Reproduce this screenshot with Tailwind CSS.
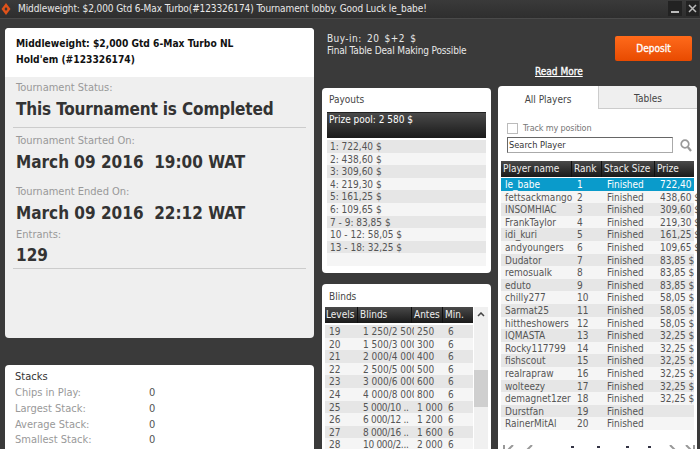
<!doctype html>
<html>
<head>
  <meta charset="UTF-8">
  <script src="https://cdn.jsdelivr.net/npm/@tailwindcss/browser@4"></script>
</head>
<body class="w-[700px] h-[449px] overflow-hidden bg-[#3a3a3a] font-['DejaVu_Sans_Condensed','DejaVu_Sans',sans-serif] text-[10px] text-[#333]">

  <!-- Title bar -->
  <header class="h-[19px] bg-gradient-to-b from-[#3a3a3a] to-[#2e2e2e] border-b border-[#4a4a4a] flex items-center text-[#e8e8e8]">
    <svg class="ml-[1px] w-[10px] h-[14px]" viewBox="0 0 10 14"><path d="M5 1 L9.5 7 L5 13 L.5 7 Z" fill="#e0521a"/><path d="M5 5 L6.5 7 L5 9 L3.5 7 Z" fill="#333"/></svg>
    <span class="ml-[7px] leading-none tracking-[-0.1px]">Middleweight: $2,000 Gtd 6-Max Turbo(#123326174) Tournament lobby. Good Luck le_babe!</span>
    <div class="ml-auto flex gap-[4px] h-[15px] mt-[-2px] mr-[1px]">
      <div class="w-[14px] bg-[#222] relative"><div class="absolute left-[3px] bottom-[3px] w-[8px] h-[2px] bg-[#bbb]"></div></div>
      <div class="w-[13px] bg-[#222] flex items-center justify-center">
        <svg class="w-[9px] h-[9px]" viewBox="0 0 9 9"><path d="M1 1 L8 8 M8 1 L1 8" stroke="#bbb" stroke-width="1.5"/></svg>
      </div>
    </div>
  </header>

  <div class="flex">
    <!-- Left column -->
    <div class="w-[322px] pl-[5px] pt-[9px] shrink-0">
      <section class="w-[309px] h-[310px] bg-[#efefef] rounded-[4px] overflow-hidden">
        <div class="h-[49px] bg-white px-[11px] pt-[8px] font-bold text-[#111] leading-[16px] text-[10.2px]">
          Middleweight: $2,000 Gtd 6-Max Turbo NL<br>Hold'em (#123326174)
        </div>
        <div class="px-[8px] text-[11px]">
          <div class="px-[3px] pt-[4px] h-[51px] border-b border-[#ccc]">
            <p class="text-[#999] leading-[14px]">Tournament Status:</p>
            <p class="text-[17px] leading-[28px] text-[#333] font-bold tracking-[-0.15px] whitespace-pre">This Tournament is Completed</p>
          </div>
          <div class="px-[3px] pt-[6px]">
            <p class="text-[#999] leading-[14px]">Tournament Started On:</p>
            <p class="text-[17px] leading-[28px] font-bold text-[#333] whitespace-pre">March 09 2016  19:00 WAT</p>
          </div>
          <div class="px-[3px] pt-[9px]">
            <p class="text-[#999] leading-[14px]">Tournament Ended On:</p>
            <p class="text-[17px] leading-[28px] font-bold text-[#333] whitespace-pre">March 09 2016  22:12 WAT</p>
          </div>
          <div class="px-[3px] pt-[1px] border-b border-[#ccc]">
            <p class="text-[#999] leading-[14px]">Entrants:</p>
            <p class="text-[17px] leading-[25px] mt-[1px] font-bold text-[#333]">129</p>
          </div>
        </div>
      </section>
      <section class="mt-[27px] w-[309px] h-[84px] bg-white rounded-t-[4px] overflow-hidden px-[10px] pt-[5px] text-[11px]">
        <p class="text-[#333] leading-[14px] mb-[1px]">Stacks</p>
        <div class="grid grid-cols-[134px_1fr] text-[#999]">
          <span class="leading-[16px]">Chips in Play:</span><span class="leading-[16px] text-[#555]">0</span>
          <span class="leading-[16px]">Largest Stack:</span><span class="leading-[16px] text-[#555]">0</span>
          <span class="leading-[15px]">Average Stack:</span><span class="leading-[15px] text-[#555]">0</span>
          <span class="leading-[16px]">Smallest Stack:</span><span class="leading-[16px] text-[#555]">0</span>
        </div>
      </section>
    </div>

    <!-- Right area -->
    <div class="flex-1">
      <!-- Buy-in and deposit -->
      <div class="h-[58px] relative text-[#e8e8e8] leading-[12px] pt-[14px] pl-[5px]">
        <p class="tracking-[0.45px] [word-spacing:2px]">Buy-in: 20 $+2 $</p>
        <p class="tracking-[-0.15px]">Final Table Deal Making Possible</p>
        <a class="absolute left-[213px] top-[47px] text-white underline leading-[12px] [-webkit-text-stroke:0.3px_white]">Read More</a>
        <button class="absolute left-[293px] top-[17px] w-[77px] h-[25px] rounded-[2px] bg-gradient-to-b from-[#ff6a1a] to-[#e84a00] text-white text-[10px] [-webkit-text-stroke:0.3px_white]">Deposit</button>
      </div>

      <div class="flex items-start pt-[11px]">
        <!-- Middle column -->
        <div class="w-[169px] shrink-0">
          <section class="h-[185px] bg-white rounded-[4px] px-[5px] pt-[5px]">
            <p class="leading-[14px] pl-[2px] mb-[5px] text-[#444]">Payouts</p>
            <div class="h-[26px] bg-gradient-to-b from-[#4a4a4a] to-[#1a1a1a] border-t border-[#222] text-white pl-[2px] leading-[14px]">Prize pool: 2 580 $</div>
            <div class="mt-[2px] text-[#555] leading-[14px]">
              <div class="h-[12.6px] bg-[#e6e6e6] pl-[3px]">1: 722,40 $</div>
              <div class="h-[12.6px] bg-[#f5f5f5] pl-[3px]">2: 438,60 $</div>
              <div class="h-[12.6px] bg-[#e6e6e6] pl-[3px]">3: 309,60 $</div>
              <div class="h-[12.6px] bg-[#f5f5f5] pl-[3px]">4: 219,30 $</div>
              <div class="h-[12.6px] bg-[#e6e6e6] pl-[3px]">5: 161,25 $</div>
              <div class="h-[12.6px] bg-[#f5f5f5] pl-[3px]">6: 109,65 $</div>
              <div class="h-[12.6px] bg-[#e6e6e6] pl-[3px]">7 - 9: 83,85 $</div>
              <div class="h-[12.6px] bg-[#f5f5f5] pl-[3px]">10 - 12: 58,05 $</div>
              <div class="h-[12.6px] bg-[#e6e6e6] pl-[3px]">13 - 18: 32,25 $</div>
              <div class="h-[12.6px] bg-[#f5f5f5]"></div>
            </div>
          </section>
          <section class="mt-[11px] h-[165px] bg-white rounded-t-[4px] pl-[3px] pt-[6px] relative overflow-hidden">
            <p class="leading-[14px] pl-[4px] mb-[3px] text-[#444]">Blinds</p>
            <div class="grid grid-cols-[33px_54px_31px_30px] h-[16px] bg-gradient-to-b from-[#4a4a4a] to-[#1a1a1a] text-[#eee] leading-[15px] w-[148px]">
              <span class="pl-[1px] border-r border-[#111]">Levels</span><span class="pl-[2px] border-r border-[#111]">Blinds</span><span class="pl-[2px] border-r border-[#111]">Antes</span><span class="pl-[2px]">Min.</span>
            </div>
            <div class="w-[148px] mt-[2px] text-[#555] leading-[14px] [&>div]:h-[12.6px]">
              <div class="grid grid-cols-[34px_54px_31px_25px] pl-[4px] bg-[#e6e6e6]"><span>19</span><span class="w-[51px] overflow-hidden whitespace-nowrap">1 250/2 500</span><span>250</span><span>6</span></div>
              <div class="grid grid-cols-[34px_54px_31px_25px] pl-[4px] bg-[#f5f5f5]"><span>20</span><span class="w-[51px] overflow-hidden whitespace-nowrap">1 500/3 000</span><span>300</span><span>6</span></div>
              <div class="grid grid-cols-[34px_54px_31px_25px] pl-[4px] bg-[#e6e6e6]"><span>21</span><span class="w-[51px] overflow-hidden whitespace-nowrap">2 000/4 000</span><span>400</span><span>6</span></div>
              <div class="grid grid-cols-[34px_54px_31px_25px] pl-[4px] bg-[#f5f5f5]"><span>22</span><span class="w-[51px] overflow-hidden whitespace-nowrap">2 500/5 000</span><span>500</span><span>6</span></div>
              <div class="grid grid-cols-[34px_54px_31px_25px] pl-[4px] bg-[#e6e6e6]"><span>23</span><span class="w-[51px] overflow-hidden whitespace-nowrap">3 000/6 000</span><span>600</span><span>6</span></div>
              <div class="grid grid-cols-[34px_54px_31px_25px] pl-[4px] bg-[#f5f5f5]"><span>24</span><span class="w-[51px] overflow-hidden whitespace-nowrap">4 000/8 000</span><span>800</span><span>6</span></div>
              <div class="grid grid-cols-[34px_54px_31px_25px] pl-[4px] bg-[#e6e6e6]"><span>25</span><span class="w-[51px] overflow-hidden whitespace-nowrap tracking-[-0.3px]">5 000/10 ..</span><span>1 000</span><span>6</span></div>
              <div class="grid grid-cols-[34px_54px_31px_25px] pl-[4px] bg-[#f5f5f5]"><span>26</span><span class="w-[51px] overflow-hidden whitespace-nowrap tracking-[-0.3px]">6 000/12 ..</span><span>1 200</span><span>6</span></div>
              <div class="grid grid-cols-[34px_54px_31px_25px] pl-[4px] bg-[#e6e6e6]"><span>27</span><span class="w-[51px] overflow-hidden whitespace-nowrap tracking-[-0.3px]">8 000/16 ..</span><span>1 600</span><span>6</span></div>
              <div class="grid grid-cols-[34px_54px_31px_25px] pl-[4px] bg-[#f5f5f5]"><span>28</span><span class="w-[51px] overflow-hidden whitespace-nowrap tracking-[-0.3px]">10 000/2...</span><span>2 000</span><span>6</span></div>
            </div>
            <!-- Scrollbar -->
            <div class="absolute left-[152px] top-[23px] w-[14px] h-[142px] bg-[#f0f0f0]">
              <svg class="absolute left-[3px] top-[5px] w-[8px] h-[5px]" viewBox="0 0 8 5"><path d="M1 4 L4 1 L7 4" fill="none" stroke="#444" stroke-width="1.5"/></svg>
              <div class="absolute left-0 top-[63px] w-[14px] h-[37px] bg-[#cfcfcf]"></div>
            </div>
          </section>
        </div>

        <!-- Players column -->
        <section class="ml-[7px] mt-[-2px] w-[199px] h-[363px] bg-white rounded-t-[4px] overflow-hidden relative">
          <div class="flex h-[23px]">
            <div class="w-[100px] flex items-center justify-center pt-[3px] text-[#444]">All Players</div>
            <div class="flex-1 flex items-center justify-center pt-[3px] bg-[#efefef] border-l border-b border-[#ccc] text-[#444]">Tables</div>
          </div>
          <div class="pl-[9px] pt-[14px]">
            <div class="flex items-center gap-[5px] h-[11px] text-[#777] text-[9px] tracking-[-0.15px]">
              <span class="w-[11px] h-[11px] border border-[#bbb]"></span>Track my position
            </div>
            <div class="flex items-center mt-[3px]">
              <div class="w-[166px] h-[16px] border border-[#aaa] border-t-[#666] border-l-[#666] pl-[1px] leading-[14px] text-[9.2px] text-[#333]">Search Player</div>
              <svg class="ml-[7px] w-[12px] h-[13px]" viewBox="0 0 12 13"><circle cx="5" cy="5" r="3.8" fill="none" stroke="#999" stroke-width="1.7"/><path d="M7.8 8 L11 12" stroke="#999" stroke-width="2.2"/></svg>
            </div>
          </div>
          <div class="mt-[8px] mx-[3px]">
            <div class="grid grid-cols-[71px_30px_53px_41px] h-[16px] bg-gradient-to-b from-[#4a4a4a] to-[#1a1a1a] text-[#eee] leading-[15px]">
              <span class="pl-[2px] border-r border-[#111]">Player name</span><span class="pl-[2px] border-r border-[#111]">Rank</span><span class="pl-[2px] border-r border-[#111]">Stack Size</span><span class="pl-[2px]">Prize</span>
            </div>
            <div class="mt-[1px] leading-[14px] text-[#555] [&>div]:h-[12.6px]">
              <div class="grid grid-cols-[72px_30px_53px_36px] pl-[4px] bg-[#0a9bcb] text-white"><span>le_babe</span><span>1</span><span>Finished</span><span class="whitespace-nowrap">722,40 $</span></div>
              <div class="grid grid-cols-[72px_30px_53px_36px] pl-[4px] bg-[#f5f5f5]"><span>fettsackmango</span><span>2</span><span>Finished</span><span class="whitespace-nowrap">438,60 $</span></div>
              <div class="grid grid-cols-[72px_30px_53px_36px] pl-[4px] bg-[#e6e6e6]"><span>INSOMHIAC</span><span>3</span><span>Finished</span><span class="whitespace-nowrap">309,60 $</span></div>
              <div class="grid grid-cols-[72px_30px_53px_36px] pl-[4px] bg-[#f5f5f5]"><span>FrankTaylor</span><span>4</span><span>Finished</span><span class="whitespace-nowrap">219,30 $</span></div>
              <div class="grid grid-cols-[72px_30px_53px_36px] pl-[4px] bg-[#e6e6e6]"><span>idi_kuri</span><span>5</span><span>Finished</span><span class="whitespace-nowrap">161,25 $</span></div>
              <div class="grid grid-cols-[72px_30px_53px_36px] pl-[4px] bg-[#f5f5f5]"><span>andyoungers</span><span>6</span><span>Finished</span><span class="whitespace-nowrap">109,65 $</span></div>
              <div class="grid grid-cols-[72px_30px_53px_36px] pl-[4px] bg-[#e6e6e6]"><span>Dudator</span><span>7</span><span>Finished</span><span class="whitespace-nowrap">83,85 $</span></div>
              <div class="grid grid-cols-[72px_30px_53px_36px] pl-[4px] bg-[#f5f5f5]"><span>remosualk</span><span>8</span><span>Finished</span><span class="whitespace-nowrap">83,85 $</span></div>
              <div class="grid grid-cols-[72px_30px_53px_36px] pl-[4px] bg-[#e6e6e6]"><span>eduto</span><span>9</span><span>Finished</span><span class="whitespace-nowrap">83,85 $</span></div>
              <div class="grid grid-cols-[72px_30px_53px_36px] pl-[4px] bg-[#f5f5f5]"><span>chilly277</span><span>10</span><span>Finished</span><span class="whitespace-nowrap">58,05 $</span></div>
              <div class="grid grid-cols-[72px_30px_53px_36px] pl-[4px] bg-[#e6e6e6]"><span>Sarmat25</span><span>11</span><span>Finished</span><span class="whitespace-nowrap">58,05 $</span></div>
              <div class="grid grid-cols-[72px_30px_53px_36px] pl-[4px] bg-[#f5f5f5]"><span>hittheshowers</span><span>12</span><span>Finished</span><span class="whitespace-nowrap">58,05 $</span></div>
              <div class="grid grid-cols-[72px_30px_53px_36px] pl-[4px] bg-[#e6e6e6]"><span>IQMASTA</span><span>13</span><span>Finished</span><span class="whitespace-nowrap">32,25 $</span></div>
              <div class="grid grid-cols-[72px_30px_53px_36px] pl-[4px] bg-[#f5f5f5]"><span>Rocky117799</span><span>14</span><span>Finished</span><span class="whitespace-nowrap">32,25 $</span></div>
              <div class="grid grid-cols-[72px_30px_53px_36px] pl-[4px] bg-[#e6e6e6]"><span>fishscout</span><span>15</span><span>Finished</span><span class="whitespace-nowrap">32,25 $</span></div>
              <div class="grid grid-cols-[72px_30px_53px_36px] pl-[4px] bg-[#f5f5f5]"><span>realrapraw</span><span>16</span><span>Finished</span><span class="whitespace-nowrap">32,25 $</span></div>
              <div class="grid grid-cols-[72px_30px_53px_36px] pl-[4px] bg-[#e6e6e6]"><span>wolteezy</span><span>17</span><span>Finished</span><span class="whitespace-nowrap">32,25 $</span></div>
              <div class="grid grid-cols-[72px_30px_53px_36px] pl-[4px] bg-[#f5f5f5]"><span>demagnet1zer</span><span>18</span><span>Finished</span><span class="whitespace-nowrap">32,25 $</span></div>
              <div class="grid grid-cols-[72px_30px_53px_36px] pl-[4px] bg-[#e6e6e6]"><span>Durstfan</span><span>19</span><span>Finished</span><span></span></div>
              <div class="grid grid-cols-[72px_30px_53px_36px] pl-[4px] bg-[#f5f5f5]"><span>RainerMitAl</span><span>20</span><span>Finished</span><span></span></div>
            </div>
          </div>
          <!-- Pager, cut off by the window edge -->
          <div class="absolute left-[5px] top-[359px] w-[192px] h-[4px] overflow-hidden">
            <svg class="w-[192px] h-[10px]" viewBox="0 0 192 10"><path d="M1 0 V10 M10 0 L5 5 M29 0 L24 5 M172 5 L167 0 M191 0 V10 M188 5 L183 0" fill="none" stroke="#999" stroke-width="2"/><path d="M68 2 h3 M94 2 h3 M123 2 h3 M145 2 h3" stroke="#334" stroke-width="2"/></svg>
          </div>
        </section>
      </div>
    </div>
  </div>
</body>
</html>
